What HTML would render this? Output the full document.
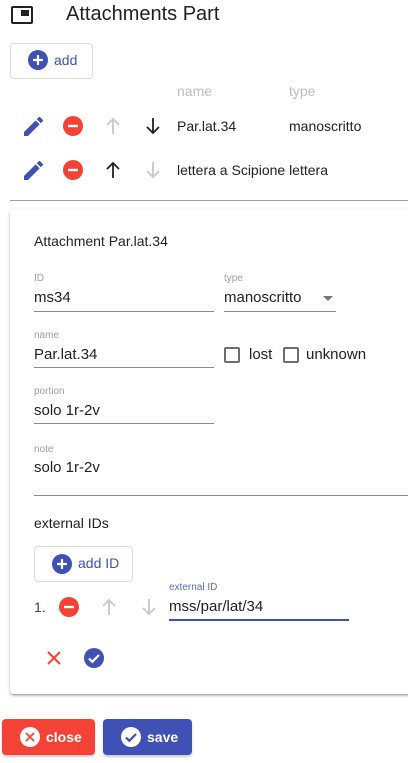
<!DOCTYPE html>
<html><head><meta charset="utf-8"><style>
*{margin:0;padding:0;box-sizing:border-box}
body{width:408px;height:763px;overflow:hidden;background:#fff;font-family:"Liberation Sans",sans-serif;color:#212121;position:relative}
.a{position:absolute;white-space:nowrap}
.t{font-size:14px;line-height:16px}
.lbl{font-size:10px;color:#9e9e9e;line-height:12px}
.ul{position:absolute;height:1px;background:#8a8a8a}
svg{position:absolute;overflow:visible}
.btn{position:absolute;border:1px solid #dcdcdc;border-radius:4px;background:#fff}
.card{position:absolute;left:10px;top:209px;width:420px;height:485px;background:#fff;border-radius:4px;box-shadow:0 2px 2px rgba(0,0,0,.18),0 1px 5px rgba(0,0,0,.12),0 3px 1px -2px rgba(0,0,0,.15)}
</style></head><body>
<!-- title icon -->
<div class="a" style="left:11px;top:6px;width:22px;height:18px;border:2.5px solid #212121;border-radius:2px"></div>
<div class="a" style="left:21px;top:10px;width:8px;height:6px;background:#212121"></div>
<div class="a" style="left:66px;top:2px;font-size:20px;line-height:24px;font-weight:500">Attachments Part</div>

<div class="btn" style="left:10px;top:43px;width:83px;height:36px"></div>
<svg style="left:28px;top:50px" width="20" height="20"><circle cx="10" cy="10" r="10" fill="#3f51b5"/><path d="M10 5v10M5 10h10" stroke="#fff" stroke-width="2.2"/></svg>
<div class="a t" style="left:54px;top:52px;color:#3f51b5;font-weight:500">add</div>

<div class="a t" style="left:177px;top:83px;color:#bdbdbd">name</div>
<div class="a t" style="left:289px;top:83px;color:#bdbdbd">type</div>

<!-- row1 -->
<svg style="left:24px;top:117px" width="19" height="19" viewBox="3 3 18 18"><path d="M3 17.25V21h3.75L17.81 9.94l-3.75-3.75L3 17.25zM20.71 7.04a1 1 0 000-1.41l-2.34-2.34a1 1 0 00-1.41 0l-1.83 1.83 3.75 3.75 1.83-1.83z" fill="#3f51b5"/></svg>
<svg style="left:63px;top:116px" width="20" height="20"><circle cx="10" cy="10" r="10" fill="#f44336"/><path d="M5 10h10" stroke="#fff" stroke-width="2.4"/></svg>
<svg style="left:105px;top:117px" width="16" height="18"><path d="M8 17V2M2 8l6-6 6 6" stroke="#c8c8c8" stroke-width="1.8" fill="none"/></svg>
<svg style="left:145px;top:117px" width="16" height="18"><path d="M8 1v15M2 10l6 6 6-6" stroke="#212121" stroke-width="1.8" fill="none"/></svg>
<div class="a t" style="left:177px;top:118px">Par.lat.34</div>
<div class="a t" style="left:289px;top:118px">manoscritto</div>
<!-- row2 -->
<svg style="left:24px;top:161px" width="19" height="19" viewBox="3 3 18 18"><path d="M3 17.25V21h3.75L17.81 9.94l-3.75-3.75L3 17.25zM20.71 7.04a1 1 0 000-1.41l-2.34-2.34a1 1 0 00-1.41 0l-1.83 1.83 3.75 3.75 1.83-1.83z" fill="#3f51b5"/></svg>
<svg style="left:63px;top:160px" width="20" height="20"><circle cx="10" cy="10" r="10" fill="#f44336"/><path d="M5 10h10" stroke="#fff" stroke-width="2.4"/></svg>
<svg style="left:105px;top:161px" width="16" height="18"><path d="M8 17V2M2 8l6-6 6 6" stroke="#212121" stroke-width="1.8" fill="none"/></svg>
<svg style="left:145px;top:161px" width="16" height="18"><path d="M8 1v15M2 10l6 6 6-6" stroke="#c8c8c8" stroke-width="1.8" fill="none"/></svg>
<div class="a t" style="left:177px;top:162px">lettera a Scipione lettera</div>

<div class="a" style="left:10px;top:200px;width:398px;height:1px;background:#9e9e9e"></div>

<div class="card"></div>
<div class="a t" style="left:34px;top:233px">Attachment Par.lat.34</div>

<div class="a lbl" style="left:34px;top:273px">ID</div>
<div class="a" style="left:34px;top:289px;font-size:15px;line-height:17px">ms34</div>
<div class="ul" style="left:34px;top:311px;width:180px"></div>
<div class="a lbl" style="left:224px;top:273px">type</div>
<div class="a" style="left:224px;top:289px;font-size:15px;line-height:17px">manoscritto</div>
<svg style="left:323px;top:296px" width="10" height="5"><path d="M0 0h10L5 5z" fill="#757575"/></svg>
<div class="ul" style="left:224px;top:311px;width:112px"></div>

<div class="a lbl" style="left:34px;top:330px">name</div>
<div class="a" style="left:34px;top:346px;font-size:15px;line-height:17px">Par.lat.34</div>
<div class="ul" style="left:34px;top:367px;width:180px"></div>
<div class="a" style="left:224px;top:347px;width:16px;height:16px;border:2px solid #6d6d6d;border-radius:2px"></div>
<div class="a" style="left:249px;top:346px;font-size:15px;line-height:17px">lost</div>
<div class="a" style="left:283px;top:347px;width:16px;height:16px;border:2px solid #6d6d6d;border-radius:2px"></div>
<div class="a" style="left:306px;top:346px;font-size:15px;line-height:17px">unknown</div>

<div class="a lbl" style="left:34px;top:386px">portion</div>
<div class="a" style="left:34px;top:402px;font-size:15px;line-height:17px">solo 1r-2v</div>
<div class="ul" style="left:34px;top:423px;width:180px"></div>

<div class="a lbl" style="left:34px;top:444px">note</div>
<div class="a" style="left:34px;top:459px;font-size:15px;line-height:17px">solo 1r-2v</div>
<div class="ul" style="left:34px;top:495px;width:374px"></div>

<div class="a t" style="left:34px;top:515px">external IDs</div>

<div class="btn" style="left:34px;top:546px;width:99px;height:36px"></div>
<svg style="left:52px;top:554px" width="20" height="20"><circle cx="10" cy="10" r="10" fill="#3f51b5"/><path d="M10 5v10M5 10h10" stroke="#fff" stroke-width="2.2"/></svg>
<div class="a t" style="left:78px;top:555px;color:#3f51b5;font-weight:500">add ID</div>

<div class="a lbl" style="left:169px;top:582px;color:#5c6bc0">external ID</div>
<div class="a t" style="left:34px;top:599px;color:#3a3f6a">1.</div>
<svg style="left:59px;top:597px" width="20" height="20"><circle cx="10" cy="10" r="10" fill="#f44336"/><path d="M5 10h10" stroke="#fff" stroke-width="2.4"/></svg>
<svg style="left:101px;top:598px" width="16" height="18"><path d="M8 17V2M2 8l6-6 6 6" stroke="#c8c8c8" stroke-width="1.8" fill="none"/></svg>
<svg style="left:141px;top:598px" width="16" height="18"><path d="M8 1v15M2 10l6 6 6-6" stroke="#c8c8c8" stroke-width="1.8" fill="none"/></svg>
<div class="a" style="left:169px;top:598px;font-size:15px;line-height:17px">mss/par/lat/34</div>
<div class="a" style="left:169px;top:619px;width:180px;height:2px;background:#3f51b5"></div>

<svg style="left:47px;top:651px" width="14" height="14"><path d="M1 1l12 12M13 1L1 13" stroke="#f44336" stroke-width="2"/></svg>
<svg style="left:84px;top:648px" width="20" height="20"><circle cx="10" cy="10" r="10" fill="#3f51b5"/><path d="M5 10.5l3.3 3.3L15 7" stroke="#fff" stroke-width="2.2" fill="none"/></svg>

<div class="a" style="left:2px;top:719px;width:93px;height:36px;background:#f44336;border-radius:4px;box-shadow:0 2px 2px rgba(0,0,0,.2)"></div>
<svg style="left:20px;top:727px" width="20" height="20"><circle cx="10" cy="10" r="10" fill="#fff"/><path d="M6 6l8 8M14 6l-8 8" stroke="#f44336" stroke-width="1.8"/></svg>
<div class="a t" style="left:46px;top:729px;color:#fff;font-weight:bold">close</div>
<div class="a" style="left:103px;top:719px;width:89px;height:36px;background:#3f51b5;border-radius:4px;box-shadow:0 2px 2px rgba(0,0,0,.2)"></div>
<svg style="left:121px;top:727px" width="20" height="20"><circle cx="10" cy="10" r="10" fill="#fff"/><path d="M5 10.5l3.3 3.3L15 7" stroke="#3f51b5" stroke-width="2.2" fill="none"/></svg>
<div class="a t" style="left:147px;top:729px;color:#fff;font-weight:bold">save</div>
</body></html>
